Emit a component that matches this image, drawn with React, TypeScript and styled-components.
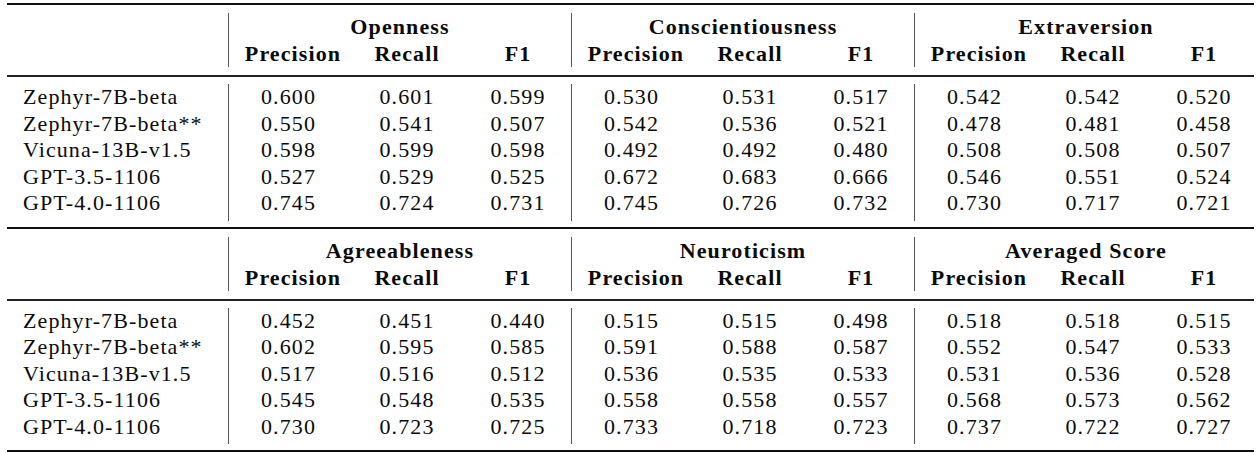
import React from "react";
import styled, { createGlobalStyle } from "styled-components";

const GlobalStyle = createGlobalStyle`
  html, body { margin: 0; padding: 0; background: #fff; }
  body {
    font-family: "Liberation Serif", "Times New Roman", serif;
    color: #0a0a0a;
  }
`;

type Group = { title: string; rows: string[][] };
type Section = { names: string[]; groups: Group[] };

const NAMES = [
  "Zephyr-7B-beta",
  "Zephyr-7B-beta**",
  "Vicuna-13B-v1.5",
  "GPT-3.5-1106",
  "GPT-4.0-1106",
];

const SECTIONS: Section[] = [
  {
    names: NAMES,
    groups: [
      {
        title: "Openness",
        rows: [
          ["0.600", "0.601", "0.599"],
          ["0.550", "0.541", "0.507"],
          ["0.598", "0.599", "0.598"],
          ["0.527", "0.529", "0.525"],
          ["0.745", "0.724", "0.731"],
        ],
      },
      {
        title: "Conscientiousness",
        rows: [
          ["0.530", "0.531", "0.517"],
          ["0.542", "0.536", "0.521"],
          ["0.492", "0.492", "0.480"],
          ["0.672", "0.683", "0.666"],
          ["0.745", "0.726", "0.732"],
        ],
      },
      {
        title: "Extraversion",
        rows: [
          ["0.542", "0.542", "0.520"],
          ["0.478", "0.481", "0.458"],
          ["0.508", "0.508", "0.507"],
          ["0.546", "0.551", "0.524"],
          ["0.730", "0.717", "0.721"],
        ],
      },
    ],
  },
  {
    names: NAMES,
    groups: [
      {
        title: "Agreeableness",
        rows: [
          ["0.452", "0.451", "0.440"],
          ["0.602", "0.595", "0.585"],
          ["0.517", "0.516", "0.512"],
          ["0.545", "0.548", "0.535"],
          ["0.730", "0.723", "0.725"],
        ],
      },
      {
        title: "Neuroticism",
        rows: [
          ["0.515", "0.515", "0.498"],
          ["0.591", "0.588", "0.587"],
          ["0.536", "0.535", "0.533"],
          ["0.558", "0.558", "0.557"],
          ["0.733", "0.718", "0.723"],
        ],
      },
      {
        title: "Averaged Score",
        rows: [
          ["0.518", "0.518", "0.515"],
          ["0.552", "0.547", "0.533"],
          ["0.531", "0.536", "0.528"],
          ["0.568", "0.573", "0.562"],
          ["0.737", "0.722", "0.727"],
        ],
      },
    ],
  },
];

const SUBHEADS = ["Precision", "Recall", "F1"];

const Page = styled.div`
  padding: 3px 0 0 7px;
`;

const Table = styled.div`
  width: 1247px;
  display: flex;
  flex-direction: column;
  border-bottom: 2px solid #111;
  font-size: 22px;
  letter-spacing: 1.1px;
`;

const Block = styled.section`
  border-top: 2px solid #111;
  display: flex;
  flex-direction: column;
`;

const HeadSection = styled.div`
  display: flex;
  padding: 8px 0 8px;
  border-bottom: 2px solid #222;
`;

const BodySection = styled.div`
  display: flex;
  padding: 7px 0 6px;
`;

const NameColumn = styled.div`
  width: 221px;
  flex: none;
  display: flex;
  flex-direction: column;
  padding-left: 16px;
  box-sizing: border-box;
`;

const NameCell = styled.div`
  height: 26.5px;
  line-height: 26.5px;
  white-space: nowrap;
`;

const GroupHead = styled.div`
  width: 342px;
  flex: none;
  border-left: 1px solid #555;
  display: grid;
  grid-template-columns: 128px 100px 114px;
  grid-template-rows: 27px 27px;
  font-weight: bold;
`;

const GroupTitle = styled.div`
  grid-column: 1 / span 3;
  text-align: center;
  line-height: 27px;
  white-space: nowrap;
`;

const GroupBody = styled.div`
  width: 342px;
  flex: none;
  border-left: 1px solid #555;
  display: grid;
  grid-template-columns: 128px 100px 114px;
  grid-auto-rows: 26.5px;
  padding-bottom: 4px;
`;

const Cell = styled.div<{ $col: number; $head?: boolean }>`
  display: flex;
  justify-content: center;
  align-items: center;
  white-space: nowrap;
  line-height: ${(p) => (p.$head ? "27px" : "26.5px")};
  padding-left: ${(p) => (p.$col === 2 ? "8px" : "0")};
  padding-right: ${(p) => (p.$col === 0 && !p.$head ? "9px" : "0")};
`;

export default function App() {
  return (
    <Page>
      <GlobalStyle />
      <Table>
        {SECTIONS.map((section, si) => (
          <Block key={si}>
            <HeadSection>
              <NameColumn />
              {section.groups.map((g) => (
                <GroupHead key={g.title}>
                  <GroupTitle>{g.title}</GroupTitle>
                  {SUBHEADS.map((h, ci) => (
                    <Cell key={h} $col={ci} $head>
                      {h}
                    </Cell>
                  ))}
                </GroupHead>
              ))}
            </HeadSection>
            <BodySection>
              <NameColumn>
                {section.names.map((n) => (
                  <NameCell key={n}>{n}</NameCell>
                ))}
              </NameColumn>
              {section.groups.map((g) => (
                <GroupBody key={g.title}>
                  {g.rows.map((row, ri) =>
                    row.map((v, ci) => (
                      <Cell key={`${ri}-${ci}`} $col={ci}>
                        {v}
                      </Cell>
                    ))
                  )}
                </GroupBody>
              ))}
            </BodySection>
          </Block>
        ))}
      </Table>
    </Page>
  );
}
